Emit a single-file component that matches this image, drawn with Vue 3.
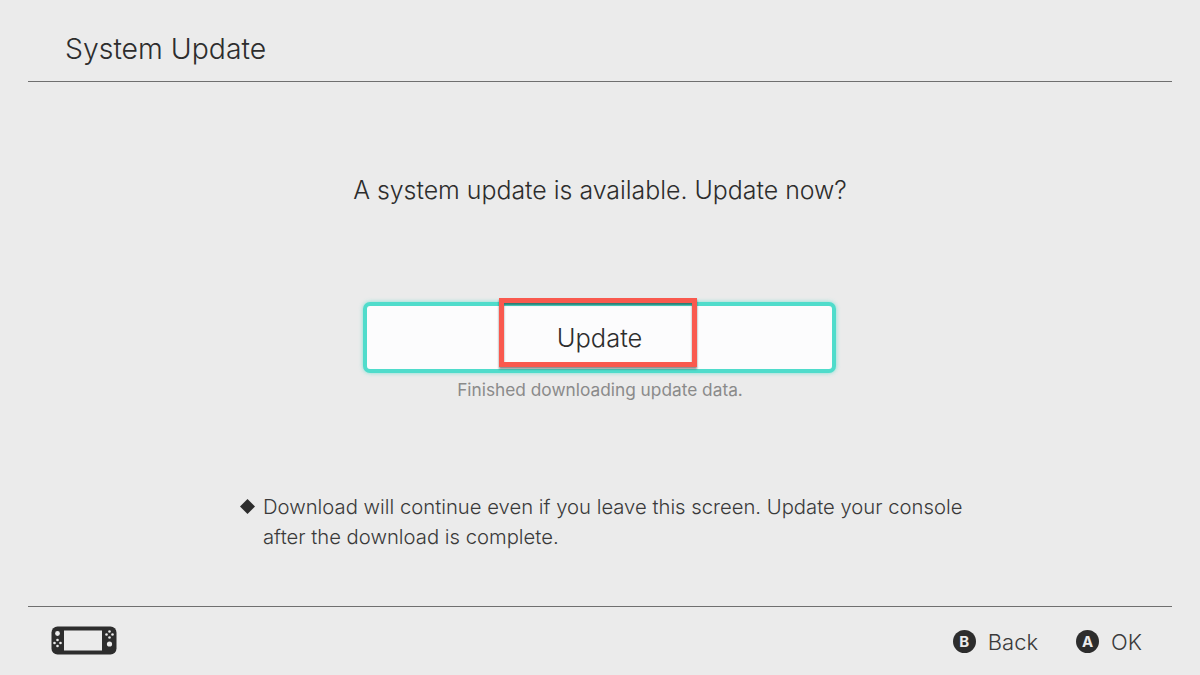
<script setup>
const title = "System Update";
const question = "A system update is available. Update now?";
</script>

<template>
  <div class="screen">
    <header class="top">
      <h1 class="title">{{ title }}</h1>
    </header>

    <main class="body">
      <p class="question">{{ question }}</p>
      <div class="update-wrap">
        <button class="update-btn">Update</button>
        <div class="annotation"></div>
      </div>
      <p class="status">Finished downloading update data.</p>
      <div class="note">
        <span class="bullet"></span>
        <p class="note-text">
          Download will continue even if you leave this screen. Update your console<br />
          after the download is complete.
        </p>
      </div>
    </main>

    <footer class="bottom">
      <svg class="console" width="66" height="30" viewBox="0 0 66 30">
        <rect x="0.5" y="0.5" width="65" height="28" rx="6" fill="#2d2d2d" />
        <rect x="13" y="4.5" width="38" height="20" fill="#ebebeb" />
        <circle cx="6.5" cy="7.5" r="2.4" fill="#ebebeb" />
        <g fill="#ebebeb">
          <circle cx="6.5" cy="14" r="1.3" />
          <circle cx="6.5" cy="20" r="1.3" />
          <circle cx="3.5" cy="17" r="1.3" />
          <circle cx="9.5" cy="17" r="1.3" />
          <circle cx="58.5" cy="5.5" r="1.3" />
          <circle cx="58.5" cy="11.5" r="1.3" />
          <circle cx="55.5" cy="8.5" r="1.3" />
          <circle cx="61.5" cy="8.5" r="1.3" />
          <circle cx="58.5" cy="18" r="2.6" />
        </g>
      </svg>
      <div class="actions">
        <span class="action"><span class="key">B</span>Back</span>
        <span class="action"><span class="key">A</span>OK</span>
      </div>
    </footer>
  </div>
</template>

<style>
html,
body {
  margin: 0;
  background: #ebebeb;
}
</style>

<style scoped>
.screen {
  width: 1200px;
  height: 675px;
  box-sizing: border-box;
  padding: 0 28px;
  display: flex;
  flex-direction: column;
  background: #ebebeb;
  color: #2d2d2d;
  font-family: Inter, "Open Sans", sans-serif;
  font-weight: 300;
  overflow: hidden;
}

.top {
  height: 82px;
  box-sizing: border-box;
  border-bottom: 1px solid #6f6f6f;
  padding: 29px 0 0 37px;
}

.title {
  margin: 0;
  font-size: 28.4px;
  font-weight: 300;
  line-height: 40px;
}

.body {
  flex: 1;
  display: flex;
  flex-direction: column;
  align-items: center;
}

.question {
  margin: 90px 0 0;
  font-size: 24.9px;
  line-height: 36px;
}

.update-wrap {
  position: relative;
  margin-top: 94px;
  margin-left: -1px;
}

.update-btn {
  display: block;
  width: 473px;
  height: 71px;
  box-sizing: border-box;
  border: 4px solid #4fdccb;
  border-radius: 7px;
  background: #fcfcfd;
  color: #2d2d2d;
  font: inherit;
  font-size: 25.5px;
  padding: 0;
  box-shadow: 0 0 4px rgba(79, 220, 203, 0.7);
}

.annotation {
  position: absolute;
  left: 136px;
  top: -4px;
  width: 198px;
  height: 69px;
  box-sizing: border-box;
  border: 5px solid #f9594e;
  box-shadow: 0 2px 2px rgba(0, 0, 0, 0.45), inset 0 2px 2px rgba(0, 0, 0, 0.45);
}

.status {
  margin: 5px 0 0;
  font-size: 17.3px;
  line-height: 24px;
  color: #8a8a8a;
  font-weight: 400;
}

.note {
  align-self: flex-start;
  display: flex;
  margin: 90px 0 0 212px;
}

.bullet {
  width: 15px;
  height: 15px;
  margin: 7px 8px 0 0;
  background: #2d2d2d;
  clip-path: polygon(50% 0, 100% 50%, 50% 100%, 0 50%);
}

.note-text {
  margin: 0;
  font-size: 20.25px;
  line-height: 30px;
  color: #3a3a3a;
}

.bottom {
  height: 69px;
  box-sizing: border-box;
  border-top: 1px solid #6f6f6f;
  padding: 0 30px 0 23px;
  display: flex;
  align-items: center;
  justify-content: space-between;
}

.console {
  display: block;
}

.actions {
  display: flex;
  gap: 38px;
}

.action {
  display: flex;
  align-items: center;
  font-size: 22px;
  line-height: 30px;
  color: #3a3a3a;
  padding-top: 1px;
}

.key {
  width: 23px;
  height: 23px;
  margin-right: 12px;
  border-radius: 50%;
  background: #2d2d2d;
  color: #ebebeb;
  font-size: 15px;
  font-weight: 700;
  line-height: 23px;
  text-align: center;
}
</style>
